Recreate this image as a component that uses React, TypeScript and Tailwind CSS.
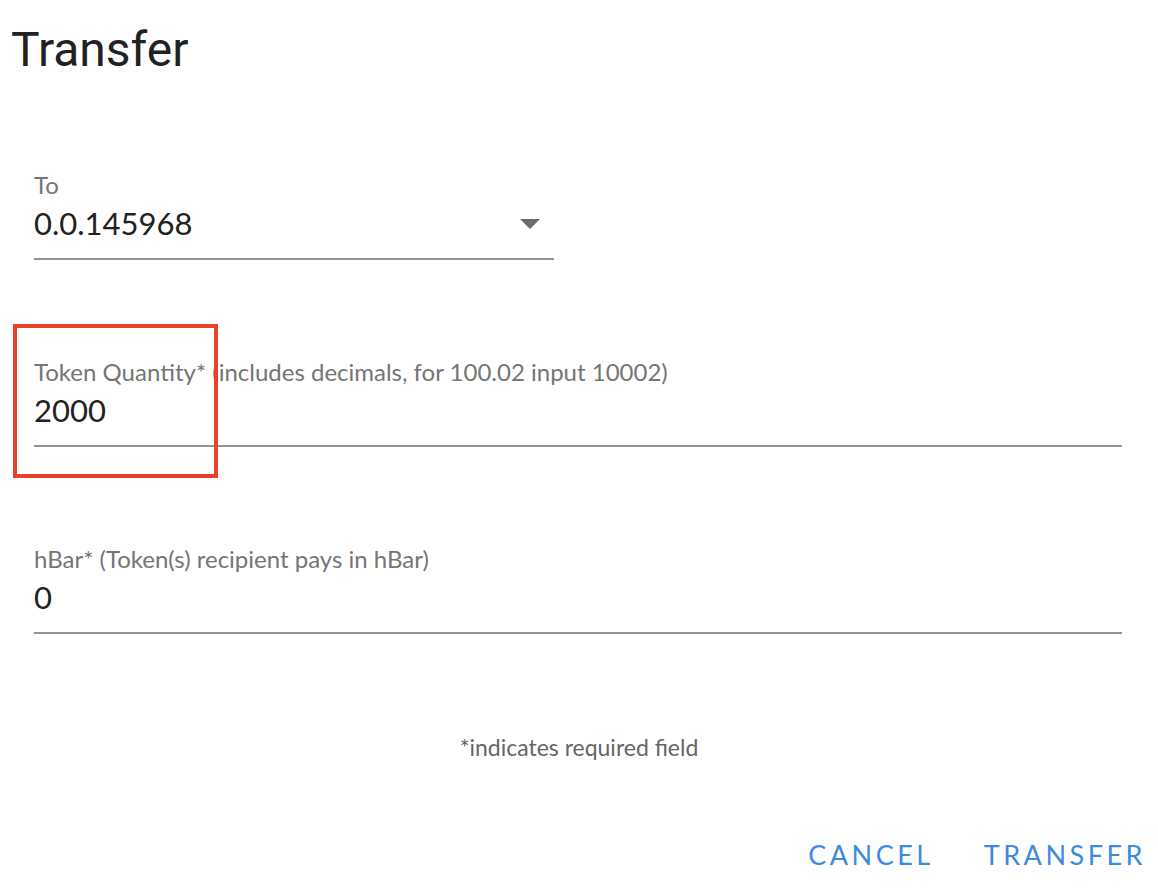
import React from 'react';

const body = { fontFamily: 'Lato, "Noto Sans", sans-serif' };

function Field({
    label,
    value,
    width,
    select,
}: {
    label: string;
    value: string;
    width: string;
    select?: boolean;
}) {
    return (
        <div className={`${width} flex flex-col`}>
            <div className="text-[24px] leading-none text-[#757575]">{label}</div>
            <div className="mt-[11px] flex items-center justify-between">
                <span className="text-[31px] leading-none text-[#212121]">{value}</span>
                {select && (
                    <svg width="20" height="10" viewBox="0 0 20 10" className="mr-[14px]">
                        <path d="M0 0 L20 0 L10 10 Z" fill="#6b6b6b" />
                    </svg>
                )}
            </div>
            <div className="mt-[19px] h-[2px] bg-[#949494]" />
        </div>
    );
}

export default function App() {
    return (
        <div className="relative w-[1158px] h-[894px] bg-white overflow-hidden" style={body}>
            <h1
                className="pl-[11px] pt-[26px] text-[48px] leading-none text-[#212121] font-normal"
                style={{ fontFamily: 'Roboto, "Noto Sans", sans-serif' }}
            >
                Transfer
            </h1>

            <div className="pl-[34px] pr-[36px] pt-[99px] flex flex-col gap-[100px]">
                <Field label="To" value="0.0.145968" width="w-[520px]" select />
                <Field
                    label="Token Quantity* (includes decimals, for 100.02 input 10002)"
                    value="2000"
                    width="w-full"
                />
                <Field label="hBar* (Token(s) recipient pays in hBar)" value="0" width="w-full" />
            </div>

            <p className="mt-[102px] text-center text-[23px] leading-none text-[#666666]">
                *indicates required field
            </p>

            <div className="mt-[82px] flex justify-end gap-[50px] pr-[12px]">
                <button className="text-[27px] leading-none tracking-[0.13em] text-[#3d8ae0]">CANCEL</button>
                <button className="text-[27px] leading-none tracking-[0.13em] text-[#3d8ae0]">TRANSFER</button>
            </div>

            {/* highlight box */}
            <div className="absolute left-[13px] top-[324px] w-[205px] h-[154px] border-[4px] border-[#e8402a]" />
        </div>
    );
}
